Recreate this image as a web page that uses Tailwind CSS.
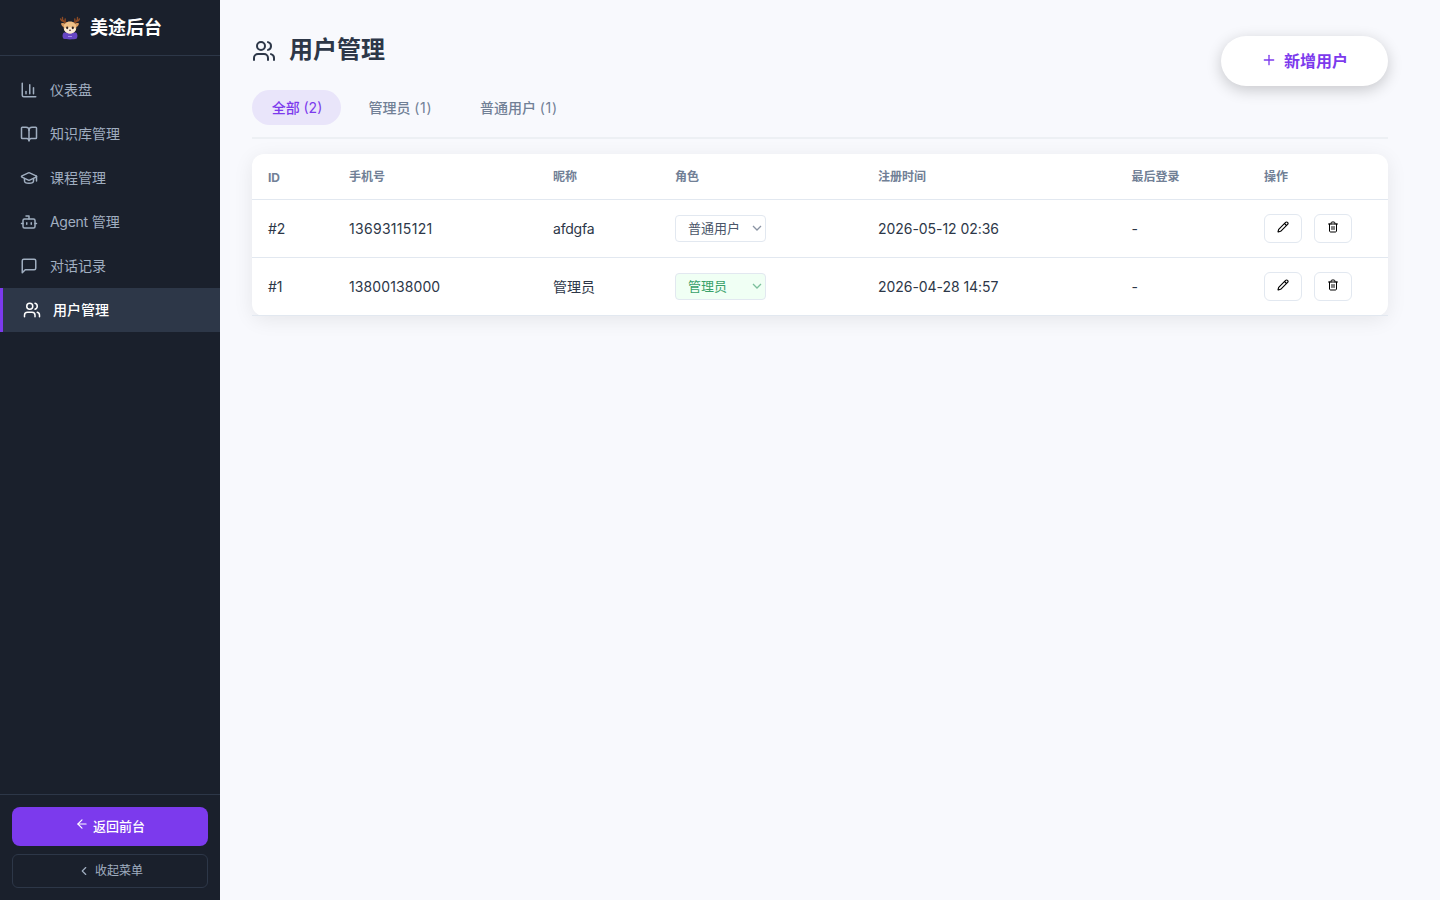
<!DOCTYPE html>
<html lang="zh-CN">
<head>
    <meta charset="UTF-8">
    <meta name="viewport" content="width=device-width, initial-scale=1.0">
    <title>用户管理 - 美途后台</title>
    <script src="https://cdn.jsdelivr.net/npm/@tailwindcss/browser@4"></script>
</head>
<body class="flex h-screen overflow-hidden bg-[#f8f9fd] font-['Inter','Noto_Sans_CJK_SC',sans-serif] text-[#2d3748]">
    <!-- Shared icons -->
    <svg class="hidden">
        <symbol id="icon-users" viewBox="0 0 24 24"><path d="M16 21v-2a4 4 0 0 0-4-4H6a4 4 0 0 0-4 4v2"/><circle cx="9" cy="7" r="4"/><path d="M22 21v-2a4 4 0 0 0-3-3.87"/><path d="M16 3.13a4 4 0 0 1 0 7.75"/></symbol>
        <symbol id="icon-pencil" viewBox="0 0 24 24"><path d="M21.174 6.812a1 1 0 0 0-3.986-3.987L3.842 16.174a2 2 0 0 0-.5.83l-1.321 4.352a.5.5 0 0 0 .623.622l4.353-1.32a2 2 0 0 0 .83-.497z"/><path d="m15 5 4 4"/></symbol>
        <symbol id="icon-trash" viewBox="0 0 24 24"><path d="M3 6h18"/><path d="M19 6v14c0 1-1 2-2 2H7c-1 0-2-1-2-2V6"/><path d="M8 6V4c0-1 1-2 2-2h4c1 0 2 1 2 2v2"/><path d="M10 11v6"/><path d="M14 11v6"/></symbol>
        <symbol id="icon-chevron" viewBox="0 0 10 6"><path d="m1 1 4 4 4-4"/></symbol>
    </svg>

    <!-- Sidebar -->
    <aside class="flex w-[220px] shrink-0 flex-col bg-[#1a202c] text-[#a0aec0]">
        <div class="flex h-14 items-center justify-center gap-2 border-b border-[#2d3748] text-lg font-bold text-white">
            <svg class="size-6" viewBox="0 0 24 24" fill="none">
                <g stroke="#8b4a25" stroke-width="1.4" stroke-linecap="round">
                    <path d="M9 7C6 6.5 4 4.5 4.5 1.5"/><path d="M5.8 5C4.2 5.2 3 4.5 2.6 3"/><path d="M7 5.8 7.2 3"/>
                    <path d="M15 7c3-.5 5-2.5 4.5-5.5"/><path d="M18.2 5c1.6.2 2.8-.5 3.2-2"/><path d="M17 5.8 16.8 3"/>
                </g>
                <path d="M3 7.5c2-.8 3.5-.3 4.5.7L6.3 11C4.5 10.8 3.2 9.5 3 7.5zM21 7.5c-2-.8-3.5-.3-4.5.7l1.2 2.8c1.8-.2 3.1-1.5 3.3-3.5z" fill="#d99a5e"/>
                <path d="M5.2 22.5c-1.2-2-.8-5 .8-6h12c1.6 1 2 4 .8 6-3 1.200-10.600 1.200-13.600 0z" fill="#6746c3"/>
                <path d="M12 5.500c-4 0-6.300 2.500-6.300 6 0 3.800 3 6 6.300 6s6.300-2.200 6.300-6c0-3.500-2.300-6-6.300-6z" fill="#efc187"/>
                <path d="M12 11.500c-2.500-.5-5.500.5-6 2 1 2.600 3.500 4 6 4s5-1.400 6-4c-.5-1.500-3.500-2.500-6-2z" fill="#fbecd6"/>
                <ellipse cx="9.2" cy="11.8" rx="1.1" ry="1.4" fill="#33231f"/>
                <ellipse cx="14.8" cy="11.8" rx="1.1" ry="1.4" fill="#33231f"/>
                <ellipse cx="12" cy="14.3" rx=".9" ry=".7" fill="#4a2a22"/>
                <path d="M10 20.500h4" stroke="#a58af0"/>
            </svg>
            <span>美途后台</span>
        </div>
        <nav class="flex-1 pt-3 text-sm">
            <a class="flex h-11 items-center gap-3 px-5">
                <svg class="size-[18px] fill-none stroke-current stroke-2" viewBox="0 0 24 24" stroke-linecap="round" stroke-linejoin="round"><path d="M3 3v16a2 2 0 0 0 2 2h16"/><path d="M18 17V9"/><path d="M13 17V5"/><path d="M8 17v-3"/></svg>
                <span>仪表盘</span>
            </a>
            <a class="flex h-11 items-center gap-3 px-5">
                <svg class="size-[18px] fill-none stroke-current stroke-2" viewBox="0 0 24 24" stroke-linecap="round" stroke-linejoin="round"><path d="M12 7v14"/><path d="M3 18a1 1 0 0 1-1-1V4a1 1 0 0 1 1-1h5a4 4 0 0 1 4 4 4 4 0 0 1 4-4h5a1 1 0 0 1 1 1v13a1 1 0 0 1-1 1h-6a3 3 0 0 0-3 3 3 3 0 0 0-3-3z"/></svg>
                <span>知识库管理</span>
            </a>
            <a class="flex h-11 items-center gap-3 px-5">
                <svg class="size-[18px] fill-none stroke-current stroke-2" viewBox="0 0 24 24" stroke-linecap="round" stroke-linejoin="round"><path d="M21.42 10.922a1 1 0 0 0-.019-1.838L12.83 5.18a2 2 0 0 0-1.66 0L2.6 9.08a1 1 0 0 0 0 1.832l8.57 3.908a2 2 0 0 0 1.66 0z"/><path d="M22 10v6"/><path d="M6 12.5V16a6 3 0 0 0 12 0v-3.5"/></svg>
                <span>课程管理</span>
            </a>
            <a class="flex h-11 items-center gap-3 px-5">
                <svg class="size-[18px] fill-none stroke-current stroke-2" viewBox="0 0 24 24" stroke-linecap="round" stroke-linejoin="round"><path d="M12 8V4H8"/><rect width="16" height="12" x="4" y="8" rx="2"/><path d="M2 14h2"/><path d="M20 14h2"/><path d="M15 13v2"/><path d="M9 13v2"/></svg>
                <span><span class="tracking-[-0.3px]">Agent</span> 管理</span>
            </a>
            <a class="flex h-11 items-center gap-3 px-5">
                <svg class="size-[18px] fill-none stroke-current stroke-2" viewBox="0 0 24 24" stroke-linecap="round" stroke-linejoin="round"><path d="M21 15a2 2 0 0 1-2 2H7l-4 4V5a2 2 0 0 1 2-2h14a2 2 0 0 1 2 2z"/></svg>
                <span>对话记录</span>
            </a>
            <a class="flex h-11 items-center gap-3 border-l-3 border-[#7c3aed] bg-[#2d3748] px-5 font-medium text-white">
                <svg class="size-[18px] fill-none stroke-current stroke-2" stroke-linecap="round" stroke-linejoin="round"><use href="#icon-users"/></svg>
                <span>用户管理</span>
            </a>
        </nav>
        <div class="flex flex-col gap-2 border-t border-[#2d3748] p-3">
            <button class="flex h-[38.5px] items-center justify-center gap-1 rounded-lg bg-[#7c3aed] text-[13px] font-medium text-white">
                <svg class="mb-1 size-3.5 fill-none stroke-current stroke-2" viewBox="0 0 24 24" stroke-linecap="round" stroke-linejoin="round"><path d="m12 19-7-7 7-7"/><path d="M19 12H5"/></svg>
                <span>返回前台</span>
            </button>
            <button class="flex h-[34.5px] items-center justify-center gap-1 rounded-md border border-[#2d3748] text-xs">
                <svg class="size-3.5 fill-none stroke-current stroke-2" viewBox="0 0 24 24" stroke-linecap="round" stroke-linejoin="round"><path d="m15 18-6-6 6-6"/></svg>
                <span>收起菜单</span>
            </button>
        </div>
    </aside>

    <!-- Main -->
    <main class="flex-1 pl-8 pr-[52px] pt-8">
        <div class="flex h-[57.5px] items-start justify-between">
            <h1 class="flex items-center gap-[13px] pt-0.5 text-2xl font-bold">
                <svg class="mt-0.5 size-6 fill-none stroke-current stroke-2" stroke-linecap="round" stroke-linejoin="round"><use href="#icon-users"/></svg>
                <span>用户管理</span>
            </h1>
            <button class="mt-[3.5px] flex h-[50.5px] w-[167px] items-center justify-center gap-[7px] rounded-full bg-white text-base font-semibold text-[#7c3aed] shadow-[0_4px_15px_rgba(0,0,0,0.2)]">
                <svg class="mb-0.5 size-4 fill-none stroke-current stroke-2" viewBox="0 0 24 24" stroke-linecap="round" stroke-linejoin="round"><path d="M5 12h14"/><path d="M12 5v14"/></svg>
                <span>新增用户</span>
            </button>
        </div>

        <!-- Role tabs -->
        <div class="mb-[15px] flex h-[49.5px] items-start gap-2 border-b-2 border-[#edf0f4] text-sm font-medium text-[#718096]">
            <button class="h-[35.5px] w-[89px] rounded-full bg-[#e9e5fa] pt-px pl-px text-[#7c3aed]">全部 <span class="font-normal">(2)</span></button>
            <button class="h-[35.5px] w-[103px] pt-px">管理员 <span class="font-normal tracking-[0.8px]">(1)</span></button>
            <button class="h-[35.5px] w-[118px] pt-px">普通用户 <span class="font-normal tracking-[0.8px]">(1)</span></button>
        </div>

        <table class="w-full table-fixed border-collapse rounded-xl bg-white text-left text-sm shadow-[0_4px_20px_rgba(0,0,0,0.08)]">
            <colgroup>
                <col class="w-[81px]">
                <col class="w-[204px]">
                <col class="w-[122px]">
                <col class="w-[203px]">
                <col class="w-[253.5px]">
                <col class="w-[132.5px]">
                <col class="w-[140px]">
            </colgroup>
            <thead>
                <tr class="h-[45px] border-b border-[#e2e8f0] text-xs text-[#718096]">
                    <th class="px-4 pt-[3px] font-bold">ID</th>
                    <th class="px-4 pt-0.5 font-semibold">手机号</th>
                    <th class="px-4 pt-0.5 font-semibold">昵称</th>
                    <th class="px-4 pt-0.5 font-semibold">角色</th>
                    <th class="px-4 pt-0.5 font-semibold">注册时间</th>
                    <th class="px-4 pt-0.5 font-semibold">最后登录</th>
                    <th class="px-4 pt-0.5 font-semibold">操作</th>
                </tr>
            </thead>
            <tbody>
                <tr class="h-[58px] border-b border-[#e2e8f0]">
                    <td class="px-4 pt-0.5">#2</td>
                    <td class="px-4 pt-0.5 tracking-[0.3px]">13693115121</td>
                    <td class="px-4 pt-0.5 tracking-[-0.2px]">afdgfa</td>
                    <td class="px-4">
                        <div class="flex h-[27px] w-[91px] items-center justify-between rounded border border-[#e2e8f0] bg-white pl-3 pr-[3px] text-[13px] text-[#4a5568]">
                            <span>普通用户</span>
                            <svg class="h-1.5 w-2.5 fill-none stroke-[#8a93a3] stroke-[1.3]"><use href="#icon-chevron"/></svg>
                        </div>
                    </td>
                    <td class="px-4 pt-0.5 tracking-[-0.05px]">2026-05-12 02:36</td>
                    <td class="px-4 pt-0.5">-</td>
                    <td class="px-4">
                        <div class="flex gap-3">
                            <button class="flex h-[29px] w-[38px] items-center justify-center rounded-md border border-[#e2e8f0] text-black"><svg class="mb-0.5 size-3 fill-none stroke-current stroke-[2.2]" stroke-linecap="round" stroke-linejoin="round"><use href="#icon-pencil"/></svg></button>
                            <button class="flex h-[29px] w-[38px] items-center justify-center rounded-md border border-[#e2e8f0] text-black"><svg class="mb-0.5 size-3 fill-none stroke-current stroke-2" stroke-linecap="round" stroke-linejoin="round"><use href="#icon-trash"/></svg></button>
                        </div>
                    </td>
                </tr>
                <tr class="h-[58px] border-b border-[#e2e8f0]">
                    <td class="px-4 pt-0.5">#1</td>
                    <td class="px-4 pt-0.5 tracking-[0.1px]">13800138000</td>
                    <td class="px-4 pt-0.5">管理员</td>
                    <td class="px-4">
                        <div class="flex h-[27px] w-[91px] items-center justify-between rounded border border-[#e2e8f0] bg-[#f0fff4] pl-3 pr-[3px] text-[13px] text-[#38a169]">
                            <span>管理员</span>
                            <svg class="h-1.5 w-2.5 fill-none stroke-[#7cc09c] stroke-[1.3]"><use href="#icon-chevron"/></svg>
                        </div>
                    </td>
                    <td class="px-4 pt-0.5 tracking-[-0.05px]">2026-04-28 14:57</td>
                    <td class="px-4 pt-0.5">-</td>
                    <td class="px-4">
                        <div class="flex gap-3">
                            <button class="flex h-[29px] w-[38px] items-center justify-center rounded-md border border-[#e2e8f0] text-black"><svg class="mb-0.5 size-3 fill-none stroke-current stroke-[2.2]" stroke-linecap="round" stroke-linejoin="round"><use href="#icon-pencil"/></svg></button>
                            <button class="flex h-[29px] w-[38px] items-center justify-center rounded-md border border-[#e2e8f0] text-black"><svg class="mb-0.5 size-3 fill-none stroke-current stroke-2" stroke-linecap="round" stroke-linejoin="round"><use href="#icon-trash"/></svg></button>
                        </div>
                    </td>
                </tr>
            </tbody>
        </table>
    </main>
</body>
</html>
